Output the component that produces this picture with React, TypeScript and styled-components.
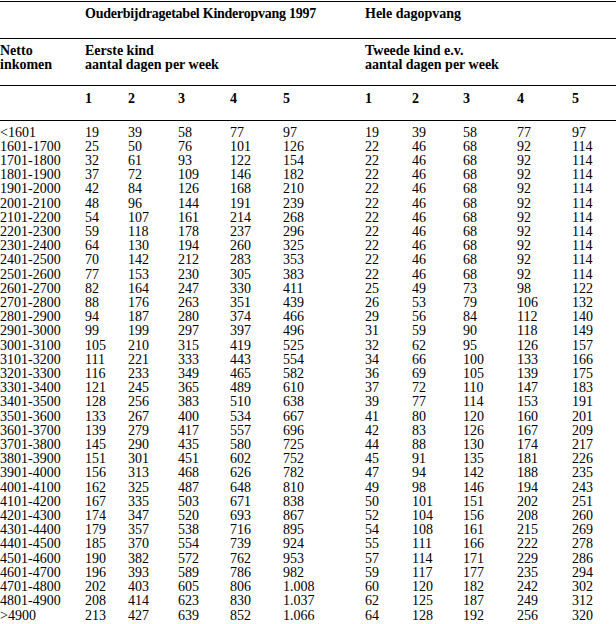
import React from "react";
import styled, { createGlobalStyle } from "styled-components";

const GlobalStyle = createGlobalStyle`
  html, body {
    margin: 0;
    padding: 0;
    background: #fff;
  }
  body {
    font-family: "Liberation Serif", "Times New Roman", serif;
    font-size: 14px;
    color: #000;
  }
`;

const COLUMNS = "85px 43px 50px 52px 53px 82px 47px 51px 54px 55px 1fr";

type Row = [string, number[], number[]];

const same = [22, 46, 68, 92, 114];

const rows: Row[] = [
  ["<1601", [19, 39, 58, 77, 97], [19, 39, 58, 77, 97]],
  ["1601-1700", [25, 50, 76, 101, 126], same],
  ["1701-1800", [32, 61, 93, 122, 154], same],
  ["1801-1900", [37, 72, 109, 146, 182], same],
  ["1901-2000", [42, 84, 126, 168, 210], same],
  ["2001-2100", [48, 96, 144, 191, 239], same],
  ["2101-2200", [54, 107, 161, 214, 268], same],
  ["2201-2300", [59, 118, 178, 237, 296], same],
  ["2301-2400", [64, 130, 194, 260, 325], same],
  ["2401-2500", [70, 142, 212, 283, 353], same],
  ["2501-2600", [77, 153, 230, 305, 383], same],
  ["2601-2700", [82, 164, 247, 330, 411], [25, 49, 73, 98, 122]],
  ["2701-2800", [88, 176, 263, 351, 439], [26, 53, 79, 106, 132]],
  ["2801-2900", [94, 187, 280, 374, 466], [29, 56, 84, 112, 140]],
  ["2901-3000", [99, 199, 297, 397, 496], [31, 59, 90, 118, 149]],
  ["3001-3100", [105, 210, 315, 419, 525], [32, 62, 95, 126, 157]],
  ["3101-3200", [111, 221, 333, 443, 554], [34, 66, 100, 133, 166]],
  ["3201-3300", [116, 233, 349, 465, 582], [36, 69, 105, 139, 175]],
  ["3301-3400", [121, 245, 365, 489, 610], [37, 72, 110, 147, 183]],
  ["3401-3500", [128, 256, 383, 510, 638], [39, 77, 114, 153, 191]],
  ["3501-3600", [133, 267, 400, 534, 667], [41, 80, 120, 160, 201]],
  ["3601-3700", [139, 279, 417, 557, 696], [42, 83, 126, 167, 209]],
  ["3701-3800", [145, 290, 435, 580, 725], [44, 88, 130, 174, 217]],
  ["3801-3900", [151, 301, 451, 602, 752], [45, 91, 135, 181, 226]],
  ["3901-4000", [156, 313, 468, 626, 782], [47, 94, 142, 188, 235]],
  ["4001-4100", [162, 325, 487, 648, 810], [49, 98, 146, 194, 243]],
  ["4101-4200", [167, 335, 503, 671, 838], [50, 101, 151, 202, 251]],
  ["4201-4300", [174, 347, 520, 693, 867], [52, 104, 156, 208, 260]],
  ["4301-4400", [179, 357, 538, 716, 895], [54, 108, 161, 215, 269]],
  ["4401-4500", [185, 370, 554, 739, 924], [55, 111, 166, 222, 278]],
  ["4501-4600", [190, 382, 572, 762, 953], [57, 114, 171, 229, 286]],
  ["4601-4700", [196, 393, 589, 786, 982], [59, 117, 177, 235, 294]],
  ["4701-4800", [202, 403, 605, 806, 1008], [60, 120, 182, 242, 302]],
  ["4801-4900", [208, 414, 623, 830, 1037], [62, 125, 187, 249, 312]],
  [">4900", [213, 427, 639, 852, 1066], [64, 128, 192, 256, 320]],
];

// dutch thousands separator: 1.008
const fmt = (n: number) => (n >= 1000 ? n.toLocaleString("nl-NL") : String(n));

const Page = styled.div`
  width: 616px;
  padding-top: 1px;
`;

const HeadSection = styled.div<{ $height: number; $pad: number }>`
  display: grid;
  grid-template-columns: ${COLUMNS};
  box-sizing: border-box;
  height: ${(p) => p.$height}px;
  padding-top: ${(p) => p.$pad}px;
  border-top: 1px solid #000;
  font-weight: bold;
  line-height: 14.2px;
`;

const Span = styled.div<{ $from: number; $tight?: boolean }>`
  grid-column: ${(p) => p.$from} / span 5;
  white-space: nowrap;
  letter-spacing: ${(p) => (p.$tight ? "-0.25px" : "normal")};
`;

const Cell = styled.div`
  white-space: nowrap;
`;

const Body = styled.div`
  border-top: 1px solid #000;
  padding-top: 4.6px;
`;

const DataRow = styled.div`
  display: grid;
  grid-template-columns: ${COLUMNS};
  line-height: 14.2px;
  white-space: nowrap;
`;

export default function App() {
  return (
    <>
      <GlobalStyle />
      <Page>
        <HeadSection $height={37} $pad={4.5}>
          <Cell />
          <Span $from={2} $tight>
            Ouderbijdragetabel Kinderopvang 1997
          </Span>
          <Span $from={7}>Hele dagopvang</Span>
        </HeadSection>
        <HeadSection $height={47} $pad={4.5}>
          <Cell>
            Netto
            <br />
            inkomen
          </Cell>
          <Span $from={2}>
            Eerste kind
            <br />
            aantal dagen per week
          </Span>
          <Span $from={7}>
            Tweede kind e.v.
            <br />
            aantal dagen per week
          </Span>
        </HeadSection>
        <HeadSection $height={35} $pad={6}>
          <Cell />
          {[1, 2, 3, 4, 5, 1, 2, 3, 4, 5].map((d, i) => (
            <Cell key={i}>{d}</Cell>
          ))}
        </HeadSection>
        <Body>
          {rows.map(([label, first, second]) => (
            <DataRow key={label}>
              <Cell>{label}</Cell>
              {[...first, ...second].map((v, i) => (
                <Cell key={i}>{fmt(v)}</Cell>
              ))}
            </DataRow>
          ))}
        </Body>
      </Page>
    </>
  );
}
